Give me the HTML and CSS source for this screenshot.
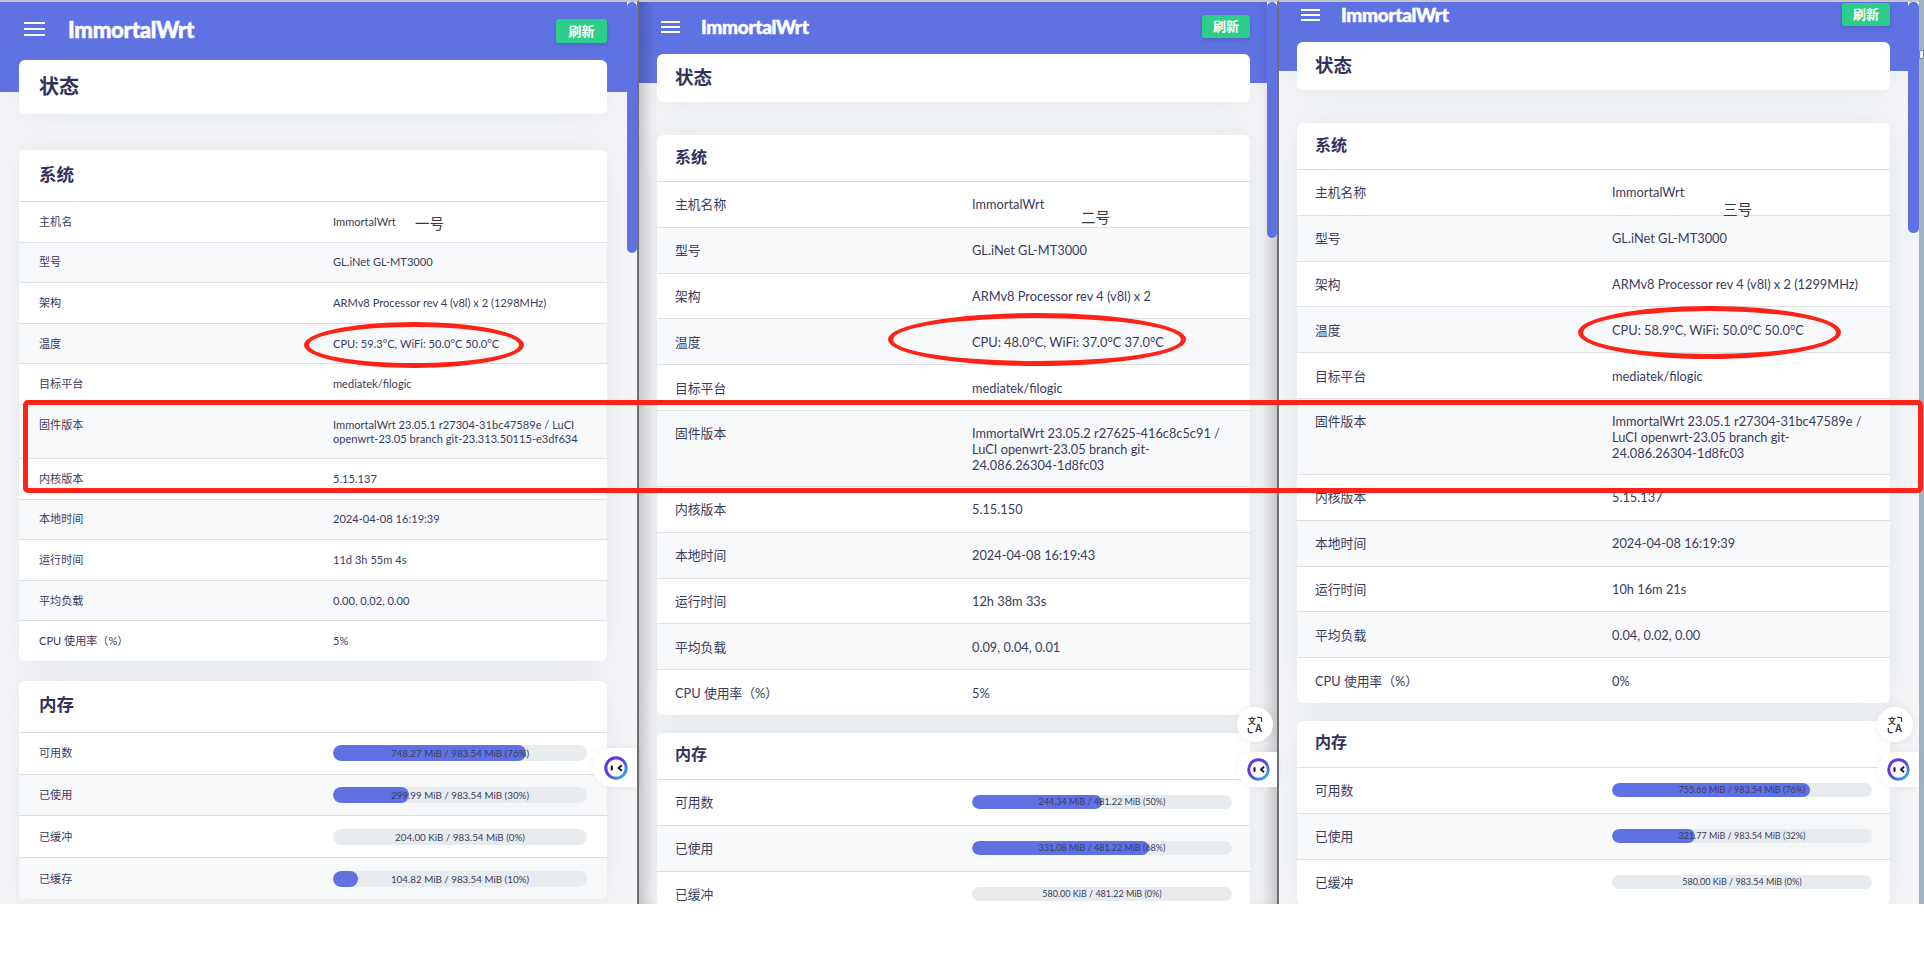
FILE: index.html
```html
<!DOCTYPE html>
<html lang="zh-CN">
<head>
<meta charset="utf-8">
<title>状态 - ImmortalWrt</title>
<link rel="stylesheet" href="styles.css">
</head>
<body>
<div class="desk">

  <section class="win win1">
    <div class="page">
      <header class="topbar">
        <span class="burger"><i></i><i></i><i></i></span>
        <span class="logo">ImmortalWrt</span>
        <button class="refresh">刷新</button>
      </header>
      <div class="card status"><h2>状态</h2></div>
      <div class="card sys">
        <h3>系统</h3>
        <div class="row"><span>主机名</span><span>ImmortalWrt</span></div>
        <div class="row"><span>型号</span><span>GL.iNet GL-MT3000</span></div>
        <div class="row"><span>架构</span><span>ARMv8 Processor rev 4 (v8l) x 2 (1298MHz)</span></div>
        <div class="row"><span>温度</span><span>CPU: 59.3°C, WiFi: 50.0°C 50.0°C</span></div>
        <div class="row"><span>目标平台</span><span>mediatek/filogic</span></div>
        <div class="row fw"><span>固件版本</span><span>ImmortalWrt 23.05.1 r27304-31bc47589e / LuCI<br>openwrt-23.05 branch git-23.313.50115-e3df634</span></div>
        <div class="row"><span>内核版本</span><span>5.15.137</span></div>
        <div class="row"><span>本地时间</span><span>2024-04-08 16:19:39</span></div>
        <div class="row"><span>运行时间</span><span>11d 3h 55m 4s</span></div>
        <div class="row"><span>平均负载</span><span>0.00, 0.02, 0.00</span></div>
        <div class="row"><span>CPU 使用率（%）</span><span>5%</span></div>
      </div>
      <div class="card mem">
        <h3>内存</h3>
        <div class="row"><span>可用数</span><div class="bar"><b style="width:76%"></b><em>748.27 MiB / 983.54 MiB (76%)</em></div></div>
        <div class="row"><span>已使用</span><div class="bar"><b style="width:30%"></b><em>299.99 MiB / 983.54 MiB (30%)</em></div></div>
        <div class="row"><span>已缓冲</span><div class="bar"><b style="width:0%"></b><em>204.00 KiB / 983.54 MiB (0%)</em></div></div>
        <div class="row"><span>已缓存</span><div class="bar"><b style="width:10%"></b><em>104.82 MiB / 983.54 MiB (10%)</em></div></div>
      </div>
    </div>
    <span class="thumb"></span>
  </section>

  <section class="win win2">
    <div class="page">
      <header class="topbar">
        <span class="burger"><i></i><i></i><i></i></span>
        <span class="logo">ImmortalWrt</span>
        <button class="refresh">刷新</button>
      </header>
      <div class="card status"><h2>状态</h2></div>
      <div class="card sys">
        <h3>系统</h3>
        <div class="row"><span>主机名称</span><span>ImmortalWrt</span></div>
        <div class="row"><span>型号</span><span>GL.iNet GL-MT3000</span></div>
        <div class="row"><span>架构</span><span>ARMv8 Processor rev 4 (v8l) x 2</span></div>
        <div class="row"><span>温度</span><span>CPU: 48.0°C, WiFi: 37.0°C 37.0°C</span></div>
        <div class="row"><span>目标平台</span><span>mediatek/filogic</span></div>
        <div class="row fw"><span>固件版本</span><span>ImmortalWrt 23.05.2 r27625-416c8c5c91 /<br>LuCI openwrt-23.05 branch git-<br>24.086.26304-1d8fc03</span></div>
        <div class="row"><span>内核版本</span><span>5.15.150</span></div>
        <div class="row"><span>本地时间</span><span>2024-04-08 16:19:43</span></div>
        <div class="row"><span>运行时间</span><span>12h 38m 33s</span></div>
        <div class="row"><span>平均负载</span><span>0.09, 0.04, 0.01</span></div>
        <div class="row"><span>CPU 使用率（%）</span><span>5%</span></div>
      </div>
      <div class="card mem">
        <h3>内存</h3>
        <div class="row"><span>可用数</span><div class="bar"><b style="width:50%"></b><em>244.34 MiB / 481.22 MiB (50%)</em></div></div>
        <div class="row"><span>已使用</span><div class="bar"><b style="width:68%"></b><em>331.08 MiB / 481.22 MiB (68%)</em></div></div>
        <div class="row"><span>已缓冲</span><div class="bar"><b style="width:0%"></b><em>580.00 KiB / 481.22 MiB (0%)</em></div></div>
      </div>
    </div>
    <span class="thumb"></span>
  </section>

  <section class="win win3">
    <div class="page">
      <header class="topbar">
        <span class="burger"><i></i><i></i><i></i></span>
        <span class="logo">ImmortalWrt</span>
        <button class="refresh">刷新</button>
      </header>
      <div class="card status"><h2>状态</h2></div>
      <div class="card sys">
        <h3>系统</h3>
        <div class="row"><span>主机名称</span><span>ImmortalWrt</span></div>
        <div class="row"><span>型号</span><span>GL.iNet GL-MT3000</span></div>
        <div class="row"><span>架构</span><span>ARMv8 Processor rev 4 (v8l) x 2 (1299MHz)</span></div>
        <div class="row"><span>温度</span><span>CPU: 58.9°C, WiFi: 50.0°C 50.0°C</span></div>
        <div class="row"><span>目标平台</span><span>mediatek/filogic</span></div>
        <div class="row fw"><span>固件版本</span><span>ImmortalWrt 23.05.1 r27304-31bc47589e /<br>LuCI openwrt-23.05 branch git-<br>24.086.26304-1d8fc03</span></div>
        <div class="row"><span>内核版本</span><span>5.15.137</span></div>
        <div class="row"><span>本地时间</span><span>2024-04-08 16:19:39</span></div>
        <div class="row"><span>运行时间</span><span>10h 16m 21s</span></div>
        <div class="row"><span>平均负载</span><span>0.04, 0.02, 0.00</span></div>
        <div class="row"><span>CPU 使用率（%）</span><span>0%</span></div>
      </div>
      <div class="card mem">
        <h3>内存</h3>
        <div class="row"><span>可用数</span><div class="bar"><b style="width:76%"></b><em>755.66 MiB / 983.54 MiB (76%)</em></div></div>
        <div class="row"><span>已使用</span><div class="bar"><b style="width:32%"></b><em>321.77 MiB / 983.54 MiB (32%)</em></div></div>
        <div class="row"><span>已缓冲</span><div class="bar"><b style="width:0%"></b><em>580.00 KiB / 983.54 MiB (0%)</em></div></div>
      </div>
    </div>
    <span class="thumb"></span>
  </section>

  <aside class="edge"><span class="edge-tab"></span></aside>

  <!-- floating widgets -->
  <span class="pill pill1">
    <svg viewBox="0 0 24 24" class="bot"><defs><linearGradient id="g1" x1="0" y1="0" x2="1" y2="1"><stop offset="0" stop-color="#6b2bd9"/><stop offset=".5" stop-color="#5a45e0"/><stop offset="1" stop-color="#25c3e8"/></linearGradient></defs><circle cx="12" cy="12" r="10.2" fill="#fff" stroke="url(#g1)" stroke-width="3"/><rect x="6.7" y="9.5" width="2.2" height="5" rx="1" fill="#1c1c28"/><path d="M17.8 9.2l-3.2 2.8 3.2 2.8" fill="none" stroke="#1c1c28" stroke-width="2"/></svg>
  </span>
  <span class="pill pill2">
    <svg viewBox="0 0 24 24" class="bot"><defs><linearGradient id="g2" x1="0" y1="0" x2="1" y2="1"><stop offset="0" stop-color="#6b2bd9"/><stop offset=".5" stop-color="#5a45e0"/><stop offset="1" stop-color="#25c3e8"/></linearGradient></defs><circle cx="12" cy="12" r="10.2" fill="#fff" stroke="url(#g2)" stroke-width="3"/><rect x="6.7" y="9.5" width="2.2" height="5" rx="1" fill="#1c1c28"/><path d="M17.8 9.2l-3.2 2.8 3.2 2.8" fill="none" stroke="#1c1c28" stroke-width="2"/></svg>
  </span>
  <span class="pill pill3">
    <svg viewBox="0 0 24 24" class="bot"><defs><linearGradient id="g3" x1="0" y1="0" x2="1" y2="1"><stop offset="0" stop-color="#6b2bd9"/><stop offset=".5" stop-color="#5a45e0"/><stop offset="1" stop-color="#25c3e8"/></linearGradient></defs><circle cx="12" cy="12" r="10.2" fill="#fff" stroke="url(#g3)" stroke-width="3"/><rect x="6.7" y="9.5" width="2.2" height="5" rx="1" fill="#1c1c28"/><path d="M17.8 9.2l-3.2 2.8 3.2 2.8" fill="none" stroke="#1c1c28" stroke-width="2"/></svg>
  </span>
  <span class="tr tr2"><svg viewBox="0 0 18 20" class="tr-ico"><path d="M11.5 1.5h3a2 2 0 0 1 2 2v3M6.5 18.5h-3a2 2 0 0 1-2-2v-3" fill="none" stroke="#333" stroke-width="1.4"/><text x="1" y="9" class="tr-z">文</text><text x="9" y="18.2" class="tr-a">A</text></svg></span>
  <span class="tr tr3"><svg viewBox="0 0 18 20" class="tr-ico"><path d="M11.5 1.5h3a2 2 0 0 1 2 2v3M6.5 18.5h-3a2 2 0 0 1-2-2v-3" fill="none" stroke="#333" stroke-width="1.4"/><text x="1" y="9" class="tr-z">文</text><text x="9" y="18.2" class="tr-a">A</text></svg></span>

  <!-- red annotations over the screenshots -->
  <span class="note note1">一号</span>
  <span class="note note2">二号</span>
  <span class="note note3">三号</span>
  <span class="oval oval1"></span>
  <span class="oval oval2"></span>
  <span class="oval oval3"></span>
  <span class="redbox"></span>
</div>
</body>
</html>
```
FILE: styles.css
```css
* { box-sizing: border-box; }
html, body { margin: 0; padding: 0; background: #fff; }
body {
  width: 1924px;
  height: 960px;
  overflow: hidden;
  font-family: Lato, "Noto Sans CJK SC", sans-serif;
  color: #32325d;
}
.desk {
  position: relative;
  display: flex;
  width: 1924px;
  height: 904px;
}

/* windows */
.win {
  --blue: #5e72e4;
  position: relative;
  height: 904px;
  overflow: hidden;
  border-top: 2px solid #c4c6cc;
  border-right: 2px solid #6f7074;
  background: linear-gradient(var(--blue) var(--head), #f4f5f7 var(--head));
}
.win1 {
  width: 639px;
  --head: 90px;
  --fs: 11.1px;
  --lh: 14px;
  --row: 40.6px;
  --memrow: 41.75px;
  --bar: 16px;
  --barfs: 9.8px;
  --lab: 294px;
  --pad: 20px;
  --fwtop: 13px;
  --thumb: 251px;
}
.win2, .win3 {
  --head: 81px;
  --fs: 12.8px;
  --lh: 16px;
  --row: 45.8px;
  --memrow: 46px;
  --bar: 14px;
  --barfs: 9px;
  --lab: 297px;
  --pad: 18px;
  --fwtop: 14px;
  --thumb: 236px;
}
.win2 {
  width: 640px;
  box-shadow: inset 16px 0 14px -10px rgba(0,0,0,.22), inset -16px 0 14px -10px rgba(0,0,0,.22);
}
.win3 {
  width: 640px;
  --head: 69px;
  border-right: 0;
  --thumb: 231px;
}
.page { padding: 0 27px 0 18px; }
.win1 .page { padding: 0 30px 0 19px; }
.win3 .page { margin-top: -12px; padding-right: 29px; }

/* top bar */
.topbar {
  display: flex;
  align-items: center;
  height: 52px;
  padding: 0 0 3px 4px;
  gap: 21px;
}
.win1 .topbar { height: 58px; padding: 0 0 4px 5px; gap: 23px; }
.burger { display: flex; flex-direction: column; justify-content: space-between; width: 19px; height: 12px; }
.win1 .burger { width: 21px; height: 14px; }
.burger i { display: block; height: 2px; background: #fff; }
.logo {
  font-weight: 900;
  font-size: 19px;
  letter-spacing: -.3px;
  color: #fff;
  -webkit-text-stroke: .5px #fff;
}
.win1 .logo { font-size: 22.2px; }
.refresh {
  margin-left: auto;
  width: 48px;
  height: 23px;
  padding: 0 0 2px;
  border: 0;
  border-radius: 3px;
  background: #2dce89;
  color: #fff;
  font-family: "Noto Sans CJK SC", sans-serif;
  font-weight: 700;
  font-size: 13px;
  box-shadow: 0 2px 4px rgba(50,50,93,.2);
}
.win1 .refresh { width: 51px; height: 24px; margin-top: 4px; }

/* cards */
.card {
  background: #fff;
  border-radius: 6px;
  box-shadow: 0 0 32px rgba(136,152,170,.15);
  overflow: hidden;
}
.status { height: 48px; display: flex; align-items: center; padding: 0 0 4px 18px; margin-bottom: 33px; }
.win1 .status { height: 54px; padding-left: 20px; margin-bottom: 36px; }
.status h2 {
  margin: 0;
  font-family: "Noto Sans CJK SC", sans-serif;
  font-weight: 700;
  font-size: 18.5px;
  color: #32325d;
}
.win1 .status h2 { font-size: 20px; }
h3 {
  margin: 0;
  display: flex;
  align-items: center;
  height: 46px;
  padding: 0 0 5px 18px;
  font-family: "Noto Sans CJK SC", sans-serif;
  font-weight: 700;
  font-size: 16px;
  color: #32325d;
}
.win1 h3 { height: 51px; padding-left: 20px; font-size: 17.5px; }
.sys { margin-bottom: 18px; }
.win1 .sys { margin-bottom: 20px; }

/* rows */
.row {
  display: grid;
  grid-template-columns: var(--lab) 1fr;
  align-items: center;
  height: var(--row);
  padding: 0 var(--pad);
  border-top: 1px solid #dcdfe4;
  font-size: var(--fs);
  line-height: var(--lh);
  color: #3b3b5e;
  white-space: nowrap;
}
.row:nth-child(odd) { background: #f8f9fa; }
.row.fw { height: 76px; align-items: start; padding-top: var(--fwtop); }
.win1 .row.fw { height: 54px; }
.mem .row { height: var(--memrow); }

/* progress */
.bar {
  position: relative;
  height: var(--bar);
  border-radius: 8px;
  background: #e9ecef;
  overflow: hidden;
}
.bar b { display: block; height: 100%; border-radius: 8px; background: #5e72e4; }
.bar em {
  position: absolute;
  inset: 0;
  text-align: center;
  font-style: normal;
  font-size: var(--barfs);
  line-height: var(--bar);
  color: #3b3b5e;
}

/* scroll thumb */
.thumb {
  position: absolute;
  top: 0;
  right: 0;
  width: 10px;
  height: var(--thumb);
  background: linear-gradient(#f4f5f7 5px, transparent 5px);
}
.thumb::after {
  content: "";
  position: absolute;
  inset: 0;
  border-radius: 5px;
  background: var(--blue);
}
.win3 .thumb { width: 11px; }

.edge {
  position: relative;
  width: 5px;
  height: 904px;
  background: #9fb3c4;
}
.edge-tab {
  position: absolute;
  left: 0;
  top: 50px;
  width: 5px;
  height: 9px;
  background: #e9edf2;
  border: 1px solid #7a8794;
}

/* floating buttons */
.pill {
  position: absolute;
  display: flex;
  align-items: center;
  height: 39px;
  background: #fff;
  border-radius: 20px 0 0 20px;
  box-shadow: 0 0 8px rgba(0,0,0,.06);
}
.pill1 { left: 593px; top: 748px; width: 44px; padding-left: 11px; }
.pill2 { left: 1238px; top: 752px; width: 39px; padding-left: 9px; height: 35px; }
.pill3 { left: 1878px; top: 752px; width: 41px; padding-left: 9px; height: 35px; }
.bot { width: 24px; height: 24px; }
.pill2 .bot, .pill3 .bot { width: 23px; height: 23px; }
.tr {
  position: absolute;
  top: 707px;
  display: flex;
  align-items: center;
  justify-content: center;
  width: 36px;
  height: 35px;
  border-radius: 50%;
  background: #fff;
  box-shadow: 0 0 8px rgba(0,0,0,.08);
}
.tr2 { left: 1237px; }
.tr3 { left: 1877px; }
.tr-ico { width: 16px; height: 18px; }
.tr-z { font-family: "Noto Sans CJK SC", sans-serif; font-size: 9px; font-weight: 700; fill: #333; }
.tr-a { font-family: Inter, sans-serif; font-size: 11px; font-weight: 600; fill: #333; }

/* annotations */
.note {
  position: absolute;
  font-family: "Noto Sans CJK SC", sans-serif;
  font-size: 14.5px;
  line-height: 15px;
  color: #3a3a3a;
}
.note1 { left: 415px; top: 215px; }
.note2 { left: 1081px; top: 209px; }
.note3 { left: 1723px; top: 201px; }
.oval { position: absolute; border: 5px solid #ff2216; border-radius: 50%; }
.oval1 { left: 304px; top: 322px; width: 220px; height: 46px; }
.oval2 { left: 888px; top: 313px; width: 298px; height: 53px; }
.oval3 { left: 1578px; top: 306px; width: 263px; height: 53px; }
.redbox {
  position: absolute;
  left: 23px;
  top: 400px;
  width: 1900px;
  height: 93px;
  border: 5px solid #ff2216;
  border-radius: 5px;
}
```
